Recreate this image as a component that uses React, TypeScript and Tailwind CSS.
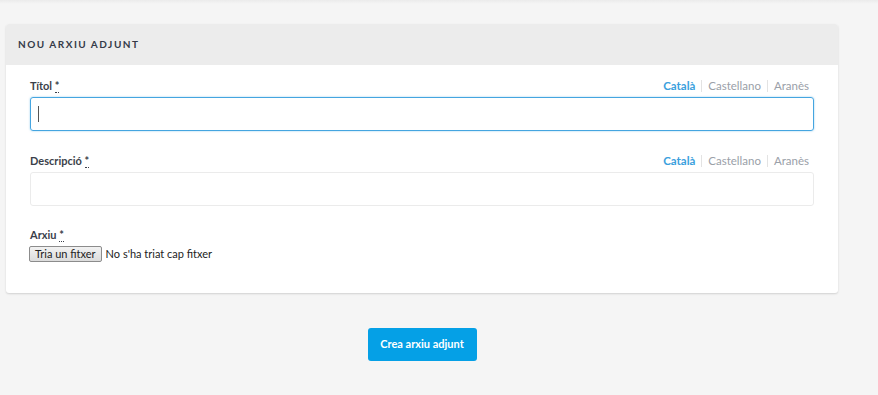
const font = { fontFamily: 'Lato, "Noto Sans", sans-serif' };

function LangSwitch() {
  return (
    <div className="flex items-center text-[11.5px] leading-none">
      <span className="font-bold text-[#3aa0dd]">Català</span>
      <span className="mx-[6px] h-[12px] w-px bg-[#e3e3e3]" />
      <span className="text-[#9aa0a8]">Castellano</span>
      <span className="mx-[6px] h-[12px] w-px bg-[#e3e3e3]" />
      <span className="text-[#9aa0a8]">Aranès</span>
    </div>
  );
}

function Label({ text }: { text: string }) {
  return (
    <span className="text-[11px] font-bold text-[#3b3f4a]">
      {text}{' '}
      <abbr className="no-underline border-b border-dotted border-[#3b3f4a] leading-none" title="obligatori">*</abbr>
    </span>
  );
}

export default function App() {
  return (
    <div className="min-h-[395px] w-[878px] bg-[#f5f5f5]" style={font}>
      <div className="h-[4px] bg-gradient-to-b from-[#ebebeb] to-[#f5f5f5]" />
      <div className="w-[832px] ml-[6px] mt-[20px]">
        <div className="rounded-[3px] bg-white shadow-[0_1px_2px_rgba(0,0,0,0.15)] overflow-hidden">
          <div className="h-[41px] bg-[#ececec] px-[12px] flex items-center">
            <h2 className="text-[10px] font-bold tracking-[1.5px] text-[#343a48] uppercase">Nou arxiu adjunt</h2>
          </div>
          <div className="px-[24px] pt-[13px] pb-[30px]">
            <div className="flex items-center justify-between h-[16px] mb-[3px]">
              <Label text="Títol" />
              <div className="pr-[5px]"><LangSwitch /></div>
            </div>
            <div className="h-[34px] rounded-[3px] border border-[#45a5e0] shadow-[0_0_2px_rgba(69,165,224,0.6)] flex items-center pl-[7px]">
              <span className="w-px h-[16px] bg-[#555]" />
            </div>

            <div className="flex items-center justify-between h-[16px] mb-[3px] mt-[22px]">
              <Label text="Descripció" />
              <div className="pr-[5px]"><LangSwitch /></div>
            </div>
            <div className="h-[34px] rounded-[3px] border border-[#ebebeb]" />

            <div className="flex items-center h-[16px] mt-[21px] mb-[3px]">
              <Label text="Arxiu" />
            </div>
            <div className="flex items-center gap-[4px] text-[11px] text-[#222]">
              <span className="h-[16px] px-[5px] flex items-center border border-[#8c8c8c] rounded-[2px] bg-gradient-to-b from-[#f2f2f2] to-[#dcdcdc] -ml-px">Tria un fitxer</span>
              <span>No s'ha triat cap fitxer</span>
            </div>
          </div>
        </div>
        <div className="flex justify-center mt-[35px]">
          <button className="h-[33px] w-[109px] rounded-[3px] bg-[#05a0e6] text-white text-[11px] font-bold">
            Crea arxiu adjunt
          </button>
        </div>
      </div>
    </div>
  );
}
